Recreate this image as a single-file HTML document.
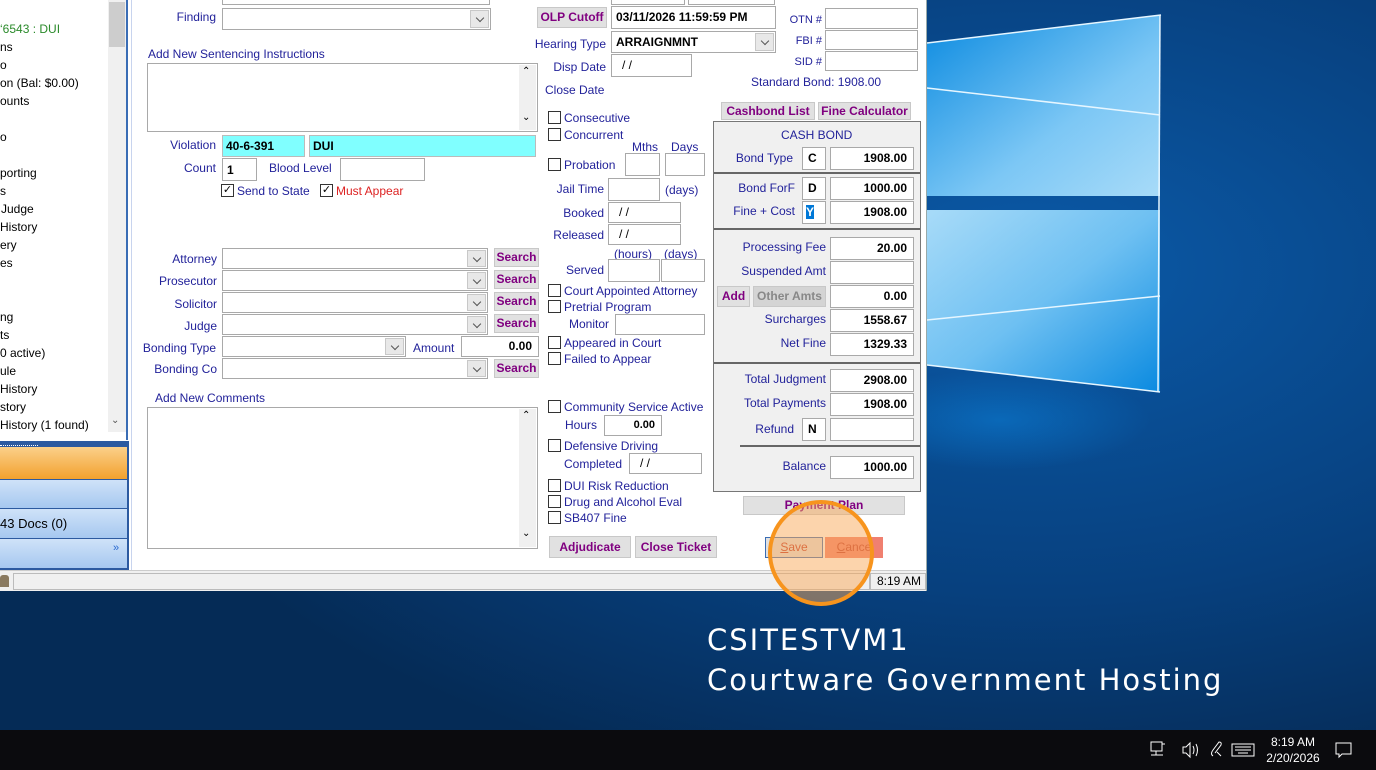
<!DOCTYPE html>
<html><head><meta charset="utf-8"><style>
*{margin:0;padding:0;box-sizing:border-box}
body{width:1376px;height:770px;overflow:hidden;position:relative;font-family:"Liberation Sans",sans-serif;font-size:12px;background:#063566}
.a{position:absolute;white-space:nowrap}
.l{position:absolute;white-space:nowrap;color:#22229a;line-height:14px}
.r{text-align:right}
.in{position:absolute;background:#fff;border:1px solid #a9a9a9}
.cb{position:absolute;background:#fff;border:1px solid #a9a9a9}
.cb:after{content:"";position:absolute;right:1px;top:1px;bottom:1px;width:17px;background:#e8e8e8;border:1px solid #c8c8c8}
.cb:before{content:"";position:absolute;right:7px;top:50%;margin-top:-4px;width:5px;height:5px;border-right:1px solid #555;border-bottom:1px solid #555;transform:rotate(45deg);z-index:2}
.btn{position:absolute;background:#e1e1e1;border:1px solid #c8c8c8;color:#800080;font-weight:bold;text-align:center}
.ck{position:absolute;width:13px;height:13px;border:1px solid #333;background:#fff}
.v{position:absolute;background:#fff;border:1px solid #a9a9a9;font-weight:bold;text-align:right;padding-right:6px;line-height:20px;color:#000}
.lp{position:absolute;left:0;line-height:14px;color:#000}
.dt{position:absolute;white-space:nowrap;left:707px;color:#fff;font-family:"DejaVu Sans",sans-serif;font-size:29px;line-height:36px;letter-spacing:2px}
</style></head><body>
<svg class="a" style="left:0;top:0" width="1376" height="770">
<defs>
<radialGradient id="g1" cx="0.75" cy="0.35" r="0.7"><stop offset="0" stop-color="#0b5aa8"/><stop offset="0.6" stop-color="#07407e"/><stop offset="1" stop-color="#052b56"/></radialGradient>
<linearGradient id="p1" x1="0" y1="0" x2="1" y2="1"><stop offset="0" stop-color="#0a8ae0"/><stop offset="0.6" stop-color="#7cc7f5"/><stop offset="1" stop-color="#a8dbf8"/></linearGradient>
<linearGradient id="p2" x1="0" y1="0" x2="1" y2="1"><stop offset="0" stop-color="#a8dbf8"/><stop offset="0.5" stop-color="#6ec0f2"/><stop offset="1" stop-color="#0a8ae0"/></linearGradient>
<radialGradient id="gl" cx="0.5" cy="0.5" r="0.5"><stop offset="0" stop-color="#0a7ad0" stop-opacity="0.6"/><stop offset="1" stop-color="#0a7ad0" stop-opacity="0"/></radialGradient>
</defs>
<rect width="1376" height="770" fill="url(#g1)"/>
<ellipse cx="1000" cy="420" rx="150" ry="50" fill="url(#gl)"/>
<polygon points="927,43 1160,15 1160,196 927,196" fill="url(#p1)"/>
<polygon points="927,210 1160,210 1160,392 927,365" fill="url(#p2)"/>
<line x1="927" y1="43" x2="1161" y2="15" stroke="#e6f6ff" stroke-width="1.5"/>
<line x1="927" y1="88" x2="1160" y2="115" stroke="#e6f6ff" stroke-width="1.5"/>
<line x1="927" y1="320" x2="1160" y2="296" stroke="#e6f6ff" stroke-width="1.5"/>
<line x1="927" y1="365" x2="1160" y2="392" stroke="#e6f6ff" stroke-width="1.5"/>
<line x1="1160" y1="15" x2="1158" y2="392" stroke="#e6f6ff" stroke-width="1.5"/>
<rect y="730" width="1376" height="40" fill="#0b0b0e"/>
</svg>

<div class="a" style="left:0;top:0;width:927px;height:591px;background:#fff;border-right:1px solid #9aa"></div>
<div class="a" style="left:0;top:0;width:128px;height:440px;background:#fff;border-right:2px solid #3a6db5"></div>
<div class="a" style="left:108px;top:0;width:18px;height:432px;background:#f0f0f0"></div>
<div class="a" style="left:109px;top:2px;width:16px;height:45px;background:#cdcdcd"></div>
<div class="a" style="left:111px;top:415px;color:#555;font-size:10px">&#8964;</div>
<div class="lp" style="top:22px;color:#2a8a2a">‘6543 : DUI</div>
<div class="lp" style="top:40px">ns</div>
<div class="lp" style="top:58px">o</div>
<div class="lp" style="top:76px">on (Bal: $0.00)</div>
<div class="lp" style="top:94px">ounts</div>
<div class="lp" style="top:130px">o</div>
<div class="lp" style="top:166px">porting</div>
<div class="lp" style="top:184px">s</div>
<div class="lp" style="top:202px">&#8202;Judge</div>
<div class="lp" style="top:220px">History</div>
<div class="lp" style="top:238px">ery</div>
<div class="lp" style="top:256px">es</div>
<div class="lp" style="top:310px">ng</div>
<div class="lp" style="top:328px">ts</div>
<div class="lp" style="top:346px">0 active)</div>
<div class="lp" style="top:364px">ule</div>
<div class="lp" style="top:382px">History</div>
<div class="lp" style="top:400px">story</div>
<div class="lp" style="top:418px">History (1 found)</div>
<div class="a" style="left:0;top:441px;width:129px;height:129px;background:#2c5aa0;border:2px solid #2c5aa0"></div>
<div class="a" style="left:0;top:445px;width:38px;height:1px;border-top:1px dotted #fff"></div>
<div class="a" style="left:0;top:447px;width:127px;height:32px;background:linear-gradient(#fbd08a,#f2a12e)"></div>
<div class="a" style="left:0;top:480px;width:127px;height:28px;background:linear-gradient(#cfe2f8,#a6c8f0)"></div>
<div class="a" style="left:0;top:509px;width:127px;height:29px;background:linear-gradient(#cfe2f8,#a6c8f0);line-height:29px;font-size:13px">43 Docs (0)</div>
<div class="a" style="left:0;top:539px;width:127px;height:29px;background:linear-gradient(#cfe2f8,#a6c8f0)"></div>
<div class="a" style="left:113px;top:542px;color:#2a6ad0;font-size:11px">»</div>
<div class="a" style="left:0;top:570px;width:926px;height:21px;background:#f0f0f0;border-top:1px solid #ccc"></div>
<div class="a" style="left:0;top:575px;width:9px;height:12px;background:#8a7a60;border-radius:3px 3px 0 0"></div>
<div class="a" style="left:13px;top:573px;width:857px;height:17px;border:1px solid #bbb;background:#f0f0f0"></div>
<div class="a" style="left:870px;top:573px;width:56px;height:17px;border:1px solid #bbb;line-height:15px;text-align:right;padding-right:4px">8:19 AM</div>
<div class="a" style="left:131px;top:0;width:1px;height:570px;background:#c8d4ee"></div>

<div class="in" style="left:222px;top:-4px;width:268px;height:9px"></div>
<div class="l r" style="left:140px;top:10px;width:76px">Finding</div>
<div class="cb" style="left:222px;top:8px;width:269px;height:22px"></div>
<div class="l" style="left:148px;top:47px">Add New Sentencing Instructions</div>
<div class="in" style="left:147px;top:63px;width:391px;height:69px"></div>
<div class="a" style="left:519px;top:65px;width:17px;height:65px;background:#f0f0f0"></div>
<div class="a" style="left:522px;top:66px;font-size:10px">&#8963;</div>
<div class="a" style="left:522px;top:112px;font-size:10px">&#8964;</div>
<div class="l r" style="left:140px;top:138px;width:76px">Violation</div>
<div class="a" style="left:222px;top:135px;width:83px;height:22px;background:#80ffff;border:1px solid #bbb;font-weight:bold;line-height:20px;padding-left:3px">40-6-391</div>
<div class="a" style="left:309px;top:135px;width:227px;height:22px;background:#80ffff;border:1px solid #bbb;font-weight:bold;line-height:20px;padding-left:3px">DUI</div>
<div class="l r" style="left:140px;top:161px;width:76px">Count</div>
<div class="in" style="left:222px;top:158px;width:35px;height:23px;font-weight:bold;line-height:22px;padding-left:4px">1</div>
<div class="l" style="left:269px;top:161px">Blood Level</div>
<div class="in" style="left:340px;top:158px;width:85px;height:23px"></div>
<div class="ck" style="left:221px;top:184px;text-align:center;line-height:10px;font-size:11px">✓</div>
<div class="l" style="left:237px;top:184px">Send to State</div>
<div class="ck" style="left:320px;top:184px;text-align:center;line-height:10px;font-size:11px">✓</div>
<div class="l" style="left:336px;top:184px;color:#d22">Must Appear</div>

<div class="l r" style="left:140px;top:252px;width:77px">Attorney</div>
<div class="cb" style="left:222px;top:248px;width:266px;height:21px"></div>
<div class="btn" style="left:494px;top:248px;width:45px;height:19px;line-height:17px">Search</div>
<div class="l r" style="left:140px;top:274px;width:77px">Prosecutor</div>
<div class="cb" style="left:222px;top:270px;width:266px;height:21px"></div>
<div class="btn" style="left:494px;top:270px;width:45px;height:19px;line-height:17px">Search</div>
<div class="l r" style="left:140px;top:297px;width:77px">Solicitor</div>
<div class="cb" style="left:222px;top:292px;width:266px;height:21px"></div>
<div class="btn" style="left:494px;top:292px;width:45px;height:19px;line-height:17px">Search</div>
<div class="l r" style="left:140px;top:319px;width:77px">Judge</div>
<div class="cb" style="left:222px;top:314px;width:266px;height:21px"></div>
<div class="btn" style="left:494px;top:314px;width:45px;height:19px;line-height:17px">Search</div>
<div class="l r" style="left:130px;top:341px;width:86px">Bonding Type</div>
<div class="cb" style="left:222px;top:336px;width:184px;height:21px"></div>
<div class="l" style="left:413px;top:341px">Amount</div>
<div class="v" style="left:461px;top:336px;width:78px;height:21px;line-height:19px">0.00</div>
<div class="l r" style="left:130px;top:362px;width:87px">Bonding Co</div>
<div class="cb" style="left:222px;top:358px;width:266px;height:21px"></div>
<div class="btn" style="left:494px;top:359px;width:45px;height:19px;line-height:17px">Search</div>
<div class="l" style="left:155px;top:391px">Add New Comments</div>
<div class="in" style="left:147px;top:407px;width:391px;height:142px"></div>
<div class="a" style="left:519px;top:409px;width:17px;height:138px;background:#f0f0f0"></div>
<div class="a" style="left:522px;top:410px;font-size:10px">&#8963;</div>
<div class="a" style="left:522px;top:528px;font-size:10px">&#8964;</div>

<div class="in" style="left:611px;top:-4px;width:74px;height:9px"></div>
<div class="in" style="left:688px;top:-4px;width:87px;height:9px"></div>
<div class="btn" style="left:537px;top:7px;width:70px;height:21px;line-height:19px">OLP Cutoff</div>
<div class="in" style="left:611px;top:6px;width:165px;height:23px;font-weight:bold;line-height:21px;padding-left:4px">03/11/2026 11:59:59 PM</div>
<div class="l r" style="left:520px;top:37px;width:86px">Hearing Type</div>
<div class="cb" style="left:611px;top:31px;width:165px;height:22px;font-weight:bold;line-height:20px;padding-left:4px">ARRAIGNMNT</div>
<div class="l r" style="left:520px;top:60px;width:86px">Disp Date</div>
<div class="in" style="left:611px;top:54px;width:81px;height:23px;line-height:21px;padding-left:10px">/ /</div>
<div class="l" style="left:545px;top:83px">Close Date</div>
<div class="ck" style="left:548px;top:111px"></div><div class="l" style="left:564px;top:111px">Consecutive</div>
<div class="ck" style="left:548px;top:128px"></div><div class="l" style="left:564px;top:128px">Concurrent</div>
<div class="l" style="left:632px;top:140px">Mths</div><div class="l" style="left:671px;top:140px">Days</div>
<div class="ck" style="left:548px;top:158px"></div><div class="l" style="left:564px;top:158px">Probation</div>
<div class="in" style="left:625px;top:153px;width:35px;height:23px"></div>
<div class="in" style="left:665px;top:153px;width:40px;height:23px"></div>
<div class="l r" style="left:530px;top:182px;width:74px">Jail Time</div>
<div class="in" style="left:608px;top:178px;width:52px;height:23px"></div>
<div class="l" style="left:665px;top:183px">(days)</div>
<div class="l r" style="left:530px;top:206px;width:74px">Booked</div>
<div class="in" style="left:608px;top:202px;width:73px;height:21px;line-height:19px;padding-left:10px">/ /</div>
<div class="l r" style="left:530px;top:228px;width:74px">Released</div>
<div class="in" style="left:608px;top:224px;width:73px;height:21px;line-height:19px;padding-left:10px">/ /</div>
<div class="l" style="left:614px;top:247px">(hours)</div><div class="l" style="left:664px;top:247px">(days)</div>
<div class="l r" style="left:530px;top:263px;width:74px">Served</div>
<div class="in" style="left:608px;top:259px;width:52px;height:23px"></div>
<div class="in" style="left:661px;top:259px;width:44px;height:23px"></div>
<div class="ck" style="left:548px;top:284px"></div><div class="l" style="left:564px;top:284px">Court Appointed Attorney</div>
<div class="ck" style="left:548px;top:300px"></div><div class="l" style="left:564px;top:300px">Pretrial Program</div>
<div class="l" style="left:569px;top:317px">Monitor</div>
<div class="in" style="left:615px;top:314px;width:90px;height:21px"></div>
<div class="ck" style="left:548px;top:336px"></div><div class="l" style="left:564px;top:336px">Appeared in Court</div>
<div class="ck" style="left:548px;top:352px"></div><div class="l" style="left:564px;top:352px">Failed to Appear</div>
<div class="ck" style="left:548px;top:400px"></div><div class="l" style="left:564px;top:400px">Community Service Active</div>
<div class="l" style="left:565px;top:418px">Hours</div>
<div class="v" style="left:604px;top:415px;width:58px;height:21px;line-height:19px;font-size:11px">0.00</div>
<div class="ck" style="left:548px;top:439px"></div><div class="l" style="left:564px;top:439px">Defensive Driving</div>
<div class="l" style="left:564px;top:457px">Completed</div>
<div class="in" style="left:629px;top:453px;width:73px;height:21px;line-height:19px;padding-left:10px">/ /</div>
<div class="ck" style="left:548px;top:479px"></div><div class="l" style="left:564px;top:479px">DUI Risk Reduction</div>
<div class="ck" style="left:548px;top:495px"></div><div class="l" style="left:564px;top:495px">Drug and Alcohol Eval</div>
<div class="ck" style="left:548px;top:511px"></div><div class="l" style="left:564px;top:511px">SB407 Fine</div>
<div class="btn" style="left:549px;top:536px;width:82px;height:22px;line-height:20px">Adjudicate</div>
<div class="btn" style="left:635px;top:536px;width:82px;height:22px;line-height:20px">Close Ticket</div>

<div class="l r" style="left:770px;top:13px;width:52px;font-size:11px">OTN #</div>
<div class="in" style="left:825px;top:8px;width:93px;height:21px"></div>
<div class="l r" style="left:770px;top:34px;width:52px;font-size:11px">FBI #</div>
<div class="in" style="left:825px;top:30px;width:93px;height:20px"></div>
<div class="l r" style="left:770px;top:55px;width:52px;font-size:11px">SID #</div>
<div class="in" style="left:825px;top:51px;width:93px;height:20px"></div>
<div class="l" style="left:751px;top:75px">Standard Bond: 1908.00</div>
<div class="btn" style="left:721px;top:102px;width:94px;height:18px;line-height:16px">Cashbond List</div>
<div class="btn" style="left:818px;top:102px;width:93px;height:18px;line-height:16px">Fine Calculator</div>
<div class="a" style="left:713px;top:121px;width:208px;height:371px;background:#f0f0f0;border:1px solid #777"></div>
<div class="a" style="left:714px;top:172px;width:206px;height:2px;background:#666"></div>
<div class="a" style="left:714px;top:228px;width:206px;height:2px;background:#666"></div>
<div class="a" style="left:714px;top:362px;width:206px;height:2px;background:#666"></div>
<div class="a" style="left:740px;top:445px;width:180px;height:2px;background:#666"></div>
<div class="l" style="left:781px;top:128px">CASH BOND</div>
<div class="l r" style="left:720px;top:151px;width:73px">Bond Type</div>
<div class="in" style="left:802px;top:147px;width:24px;height:23px;font-weight:bold;line-height:21px;padding-left:5px">C</div>
<div class="v" style="left:830px;top:147px;width:84px;height:23px">1908.00</div>
<div class="l r" style="left:720px;top:181px;width:75px">Bond ForF</div>
<div class="in" style="left:802px;top:177px;width:24px;height:23px;font-weight:bold;line-height:21px;padding-left:5px">D</div>
<div class="v" style="left:830px;top:177px;width:84px;height:23px">1000.00</div>
<div class="l r" style="left:720px;top:204px;width:75px">Fine + Cost</div>
<div class="in" style="left:802px;top:201px;width:24px;height:23px;font-weight:bold;line-height:21px;padding-left:3px"><span style="background:#0078d7;color:#fff">Y</span></div>
<div class="v" style="left:830px;top:201px;width:84px;height:23px">1908.00</div>
<div class="l r" style="left:720px;top:240px;width:106px">Processing Fee</div>
<div class="v" style="left:830px;top:237px;width:84px;height:23px">20.00</div>
<div class="l r" style="left:720px;top:264px;width:106px">Suspended Amt</div>
<div class="v" style="left:830px;top:261px;width:84px;height:23px"></div>
<div class="btn" style="left:717px;top:286px;width:33px;height:21px;line-height:19px">Add</div>
<div class="btn" style="left:753px;top:286px;width:73px;height:21px;line-height:19px;color:#888;background:#d4d4d4">Other Amts</div>
<div class="v" style="left:830px;top:285px;width:84px;height:23px">0.00</div>
<div class="l r" style="left:720px;top:312px;width:106px">Surcharges</div>
<div class="v" style="left:830px;top:309px;width:84px;height:23px">1558.67</div>
<div class="l r" style="left:720px;top:336px;width:106px">Net Fine</div>
<div class="v" style="left:830px;top:333px;width:84px;height:23px">1329.33</div>
<div class="l r" style="left:720px;top:372px;width:106px">Total Judgment</div>
<div class="v" style="left:830px;top:369px;width:84px;height:23px">2908.00</div>
<div class="l r" style="left:720px;top:396px;width:106px">Total Payments</div>
<div class="v" style="left:830px;top:393px;width:84px;height:23px">1908.00</div>
<div class="l r" style="left:720px;top:422px;width:74px">Refund</div>
<div class="in" style="left:802px;top:418px;width:24px;height:23px;font-weight:bold;line-height:21px;padding-left:5px">N</div>
<div class="v" style="left:830px;top:418px;width:84px;height:23px"></div>
<div class="l r" style="left:720px;top:459px;width:106px">Balance</div>
<div class="v" style="left:830px;top:456px;width:84px;height:23px">1000.00</div>
<div class="btn" style="left:743px;top:496px;width:162px;height:19px;line-height:17px">Payment Plan</div>
<div class="a" style="left:765px;top:537px;width:58px;height:21px;border:1px solid #3a6db5;background:#e1e1e1;color:#c0392b;text-align:center;line-height:19px"><u>S</u>ave</div>
<div class="a" style="left:825px;top:537px;width:58px;height:21px;background:#f08070;color:#c0392b;text-align:center;line-height:21px"><u>C</u>ance</div>
<div class="a" style="left:768px;top:500px;width:106px;height:106px;border-radius:50%;border:4px solid #f7941d;background:rgba(250,170,90,0.5)"></div>

<div class="dt" style="top:622px">CSITESTVM1</div>
<div class="dt" style="top:662px">Courtware Government Hosting</div>
<svg class="a" style="left:1145px;top:738px" width="120" height="24" fill="none" stroke="#fff" stroke-width="1">
<rect x="6" y="4" width="11" height="9"/><path d="M11 13v4M6 17h12M17 6h3"/>
<path d="M38 9h3l4-4v14l-4-4h-3z M48 8q2 4 0 8 M51 6q3 6 0 12"/>
<path d="M68 18q-3-2 0-6l6-8q3 0 2 3l-6 8M72 14l4 4"/>
<rect x="87" y="6" width="22" height="12"/><path d="M90 9h16M90 12h16M93 15h10"/>
</svg>
<div class="a" style="left:1262px;top:734px;color:#fff;font-size:12px;line-height:16px;text-align:center;width:62px">8:19 AM<br>2/20/2026</div>
<svg class="a" style="left:1334px;top:740px" width="20" height="20" fill="none" stroke="#fff"><path d="M2 3h15v11h-9l-3 3v-3h-3z"/></svg>
</body></html>
